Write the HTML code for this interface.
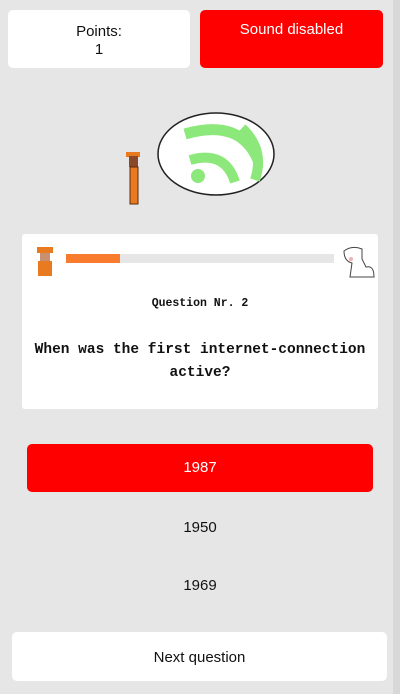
<!DOCTYPE html>
<html><head><style>
body{margin:0;width:400px;height:694px;background:#e6e6e6;font-family:"Liberation Sans",sans-serif;position:relative;overflow:hidden}
.box{position:absolute;border-radius:5px;text-align:center}
.mono{font-family:"Liberation Mono",monospace;font-weight:bold;color:#111}
</style></head><body>
<div class="box" style="left:8px;top:10px;width:182px;height:58px;background:#fff;font-size:15px;line-height:18px;color:#111;padding-top:13px;box-sizing:border-box">Points:<br>1</div>
<div class="box" style="left:200px;top:10px;width:183px;height:58px;background:#ff0000;color:#fff;font-size:15px;padding-top:11px;box-sizing:border-box">Sound disabled</div>
<div style="position:absolute;left:393px;top:0;width:7px;height:694px;background:#d8d8d8"></div>
<svg style="position:absolute;left:120px;top:110px" width="160" height="100">
<ellipse cx="96" cy="44" rx="58" ry="41" fill="#fff" stroke="#222" stroke-width="1.5"/>
<path d="M65 24 Q120 8 138 50" stroke="#8ce87a" stroke-width="11" fill="none"/>
<path d="M70 50 Q105 40 115 72" stroke="#8ce87a" stroke-width="10" fill="none"/>
<path d="M122 18 Q145 40 135 70" stroke="#8ce87a" stroke-width="10" fill="none"/>
<circle cx="78" cy="66" r="7" fill="#8ce87a"/>
<rect x="6" y="42" width="14" height="5" fill="#e87a20"/>
<rect x="9" y="46" width="9" height="11" fill="#8a4a2a"/>
<rect x="10" y="57" width="8" height="37" fill="#e87a20" stroke="#5a2a10" stroke-width="1"/>
</svg>
<div class="box" style="left:22px;top:234px;width:356px;height:175px;background:#fff;border-radius:3px"></div>
<svg style="position:absolute;left:35px;top:247px" width="20" height="32"><rect x="2" y="0" width="16" height="6" fill="#e87a20"/><rect x="5" y="6" width="10" height="8" fill="#c89070"/><rect x="3" y="14" width="14" height="15" fill="#e87a20"/></svg>
<div style="position:absolute;left:66px;top:254px;width:268px;height:9px;background:#e6e6e6"><div style="width:54px;height:9px;background:#f97b2e"></div></div>
<svg style="position:absolute;left:342px;top:245px" width="34" height="34"><path d="M2 6 Q10 0 20 4 L20 14 L24 22 Q32 20 32 32 L8 32 L10 18 Q2 16 2 6Z" fill="#fff" stroke="#444" stroke-width="1"/><circle cx="9" cy="14" r="2" fill="#f0b0b0"/></svg>
<div class="mono" style="position:absolute;left:22px;width:356px;top:297px;text-align:center;font-size:11.5px">Question Nr. 2</div>
<div class="mono" style="position:absolute;left:22px;width:356px;top:339px;text-align:center;font-size:14.5px;line-height:23px">When was the first internet-connection<br>active?</div>
<div class="box" style="left:27px;top:444px;width:346px;height:48px;background:#ff0000;color:#fff;font-size:15px;line-height:48px">1987</div>
<div class="box" style="left:27px;top:504px;width:346px;height:48px;color:#111;font-size:15px;line-height:48px">1950</div>
<div class="box" style="left:27px;top:562px;width:346px;height:48px;color:#111;font-size:15px;line-height:48px">1969</div>
<div class="box" style="left:12px;top:632px;width:375px;height:49px;background:#fff;color:#111;font-size:15px;line-height:51px">Next question</div>
</body></html>
